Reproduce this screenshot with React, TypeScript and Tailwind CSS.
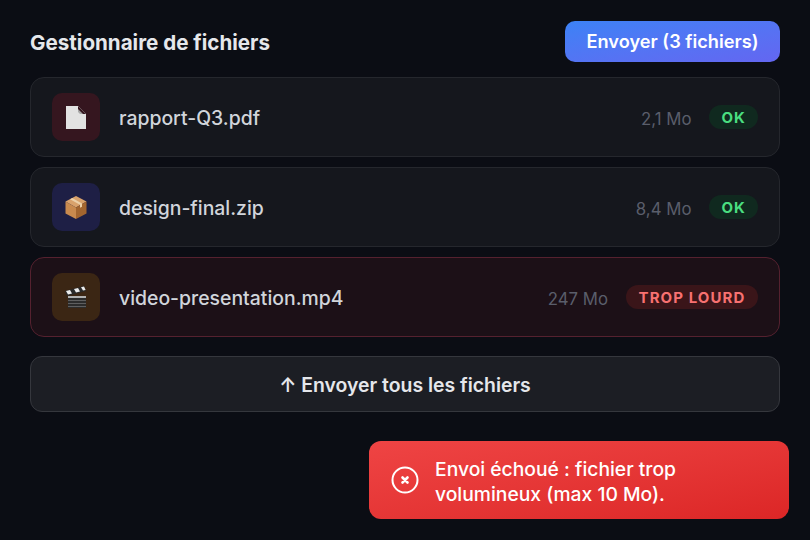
const FileIcon = () => (
  <svg width="20" height="23" viewBox="0 0 20 23">
    <path d="M0 0h12l8 8v15H0z" fill="#e2e2e2" />
    <path d="M12 0l8 8h-6l-2-2z" fill="#a8a8a8" />
    <path d="M12 0l8 8h-3l-5-5z" fill="#35161f" />
  </svg>
);

const BoxIcon = () => (
  <svg width="22" height="23" viewBox="0 0 22 23">
    <path d="M11 0l10.5 5.5L11 11.5.5 5.5z" fill="#d9a26c" />
    <path d="M.5 5.5l10.5 6V23L.5 17.5z" fill="#c98a4e" />
    <path d="M21.5 5.5l-10.5 6V23l10.5-5.5z" fill="#a3652f" />
    <path d="M5 3.2l10 5.5v3l2-1V7.6L7.2 2z" fill="#ecd0a8" />
  </svg>
);

const ClapperIcon = () => (
  <svg width="24" height="22" viewBox="0 0 24 22">
    <path d="M1 5L20 0l2 5L3 10z" fill="#2a2a2a" />
    <path d="M2 5l4-1 2 3.4-4 1zM10 3l4-1 2 3.4-4 1zM17 1.2l3-.8 1.6 3.6-2.6.6z" fill="#ececec" />
    <path d="M4 10h18v12H4z" fill="#2c2c2c" />
    <path d="M4 10h18v2H4z" fill="#b0b0b0" />
    <path d="M4 14h18v1H4zM4 17h18v1H4zM4 20h18v1H4z" fill="#5f5f5f" />
  </svg>
);

const files = [
  { name: "rapport-Q3.pdf", size: "2,1 Mo", tile: "bg-[#35161f]", icon: <FileIcon />, error: false },
  { name: "design-final.zip", size: "8,4 Mo", tile: "bg-[#1e1f45]", icon: <BoxIcon />, error: false },
  { name: "video-presentation.mp4", size: "247 Mo", tile: "bg-[#3b2614]", icon: <ClapperIcon />, error: true },
];

export default function App() {
  return (
    <div className="relative h-[540px] w-[810px] overflow-hidden bg-[#0b0d14] px-[30px] pt-[21px] font-['Inter',sans-serif]">
      <div className="mb-[15px] flex items-center justify-between">
        <h1 className="pt-[4px] text-[20.6px] font-bold text-[#e5e7eb]">Gestionnaire de fichiers</h1>
        <button className="h-[41px] w-[215px] rounded-[10px] bg-gradient-to-br from-[#3b82f6] to-[#6366f1] text-[18.2px] font-semibold text-white">
          Envoyer (3 fichiers)
        </button>
      </div>

      <div className="flex flex-col gap-[10px]">
        {files.map((f) => (
          <div
            key={f.name}
            className={`flex h-[80px] items-center rounded-[14px] border px-[21px] ${
              f.error ? "border-[#55212f] bg-[#1c1017]" : "border-[#25272d] bg-[#15171d]"
            }`}
          >
            <div className={`flex h-[48px] w-[48px] shrink-0 items-center justify-center rounded-[10px] ${f.tile}`}>
              {f.icon}
            </div>
            <span className="ml-[19px] flex-1 pt-[4px] text-[19.4px] font-medium text-[#d1d5db]">{f.name}</span>
            <span className="mr-[18px] pt-[6px] text-[16.8px] text-[#5a5e6b]">{f.size}</span>
            {f.error ? (
              <span className="flex h-[24px] items-center rounded-full bg-[#3a1519] px-[12.5px] pt-[2px] text-[15px] font-bold tracking-[1.1px] text-[#f87171]">
                TROP LOURD
              </span>
            ) : (
              <span className="flex h-[24px] items-center rounded-full bg-[#10291f] px-[12px] pt-[2px] text-[15px] font-bold tracking-[1.1px] text-[#4ade80]">
                OK
              </span>
            )}
          </div>
        ))}
      </div>

      <button className="mt-[19px] h-[56px] w-full rounded-[12px] border border-[#35373d] bg-[#1c1e24] pt-[4px] text-[19.4px] font-semibold text-[#e5e7eb]">
        ↑ Envoyer tous les fichiers
      </button>

      <div className="absolute bottom-[21px] right-[21px] flex h-[78px] w-[420px] items-center gap-[16px] rounded-[12px] bg-gradient-to-br from-[#ef4444] to-[#dc2626] px-[22px]">
        <svg width="28" height="28" viewBox="0 0 28 28" fill="none" stroke="white" className="shrink-0">
          <circle cx="14" cy="14" r="12.5" strokeWidth="2" />
          <path d="M11.5 11.5l5 5M16.5 11.5l-5 5" strokeWidth="2.6" strokeLinecap="round" />
        </svg>
        <p className="pt-[4px] text-[19.3px] font-medium leading-[25px] text-white">
          Envoi échoué : fichier trop
          <br />
          volumineux (max 10 Mo).
        </p>
      </div>
    </div>
  );
}
